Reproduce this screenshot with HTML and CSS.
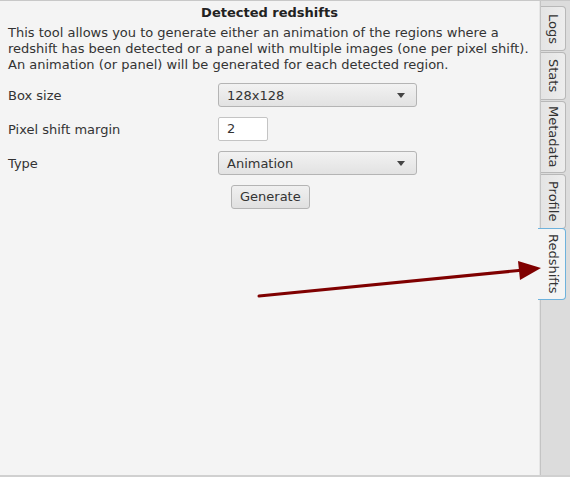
FILE: index.html
```html
<!DOCTYPE html>
<html>
<head>
<meta charset="utf-8">
<link rel="stylesheet" href="styles.css">
</head>
<body>
<div class="window">
  <div class="main">
    <div class="title">Detected redshifts</div>
    <p class="desc">This tool allows you to generate either an animation of the regions where a redshift has been detected or a panel with multiple images (one per pixel shift). An animation (or panel) will be generated for each detected region.</p>
    <div class="form">
      <div class="label">Box size</div>
      <div class="combo"><span>128x128</span><span class="caret"></span></div>
      <div class="label">Pixel shift margin</div>
      <div class="field">2</div>
      <div class="label">Type</div>
      <div class="combo"><span>Animation</span><span class="caret"></span></div>
      <div></div>
      <div class="button">Generate</div>
    </div>
  </div>
  <div class="tabs">
    <div class="tab t-logs">Logs</div>
    <div class="tab t-stats">Stats</div>
    <div class="tab t-meta">Metadata</div>
    <div class="tab t-profile">Profile</div>
    <div class="tab selected t-red">Redshifts</div>
  </div>
  <svg class="arrow" width="570" height="477" viewBox="0 0 570 477">
    <line x1="259" y1="296" x2="524" y2="270" stroke="#7f0000" stroke-width="3" stroke-linecap="round"/>
    <polygon points="541,268 518,261 520,280" fill="#7f0000"/>
  </svg>
</div>
</body>
</html>
```

FILE: styles.css
```css
html, body {
  margin: 0;
  padding: 0;
}
body {
  width: 570px;
  height: 477px;
  overflow: hidden;
  background: #f4f4f4;
  font-family: "DejaVu Sans", sans-serif;
  font-size: 13px;
  color: #333;
}
.window {
  position: relative;
  display: flex;
  box-sizing: border-box;
  height: 477px;
  border-top: 1px solid #c8c8c8;
  border-bottom: 2px solid #d0d0d0;
}
.main {
  flex: 1;
  padding: 4px 8px 0 8px;
  border-right: 1px solid #e6e6e6;
}
.title {
  text-align: center;
  font-weight: bold;
  line-height: 16px;
  color: #222;
}
.desc {
  margin: 4px 0 0 0;
  line-height: 16px;
}
.form {
  margin-top: 10px;
  display: grid;
  grid-template-columns: 210px 199px;
  row-gap: 10px;
  align-items: center;
}
.label {
  line-height: 16px;
  padding-top: 1px;
}
.combo {
  height: 24px;
  box-sizing: border-box;
  border: 1px solid #b4b4b4;
  border-radius: 3px;
  background: linear-gradient(#f2f2f2, #e2e2e2);
  display: flex;
  align-items: center;
  justify-content: space-between;
  padding: 0 11px 0 8px;
  color: #333;
}
.caret {
  width: 0;
  height: 0;
  border-left: 4px solid transparent;
  border-right: 4px solid transparent;
  border-top: 5px solid #444;
}
.field {
  width: 50px;
  height: 24px;
  box-sizing: border-box;
  border: 1px solid #c4c4c4;
  border-radius: 2px;
  background: #fff;
  padding-left: 8px;
  line-height: 22px;
}
.button {
  justify-self: start;
  margin-left: 13px;
  height: 24px;
  box-sizing: border-box;
  border: 1px solid #b4b4b4;
  border-radius: 3px;
  background: linear-gradient(#f0f0f0, #e0e0e0);
  padding: 0 8px;
  line-height: 22px;
  color: #333;
}
.tabs {
  width: 29px;
  background: #dcdcdc;
  border-left: 1px solid #c4c4c4;
  padding-top: 5px;
  display: flex;
  flex-direction: column;
  align-items: flex-start;
}
.tab {
  writing-mode: vertical-rl;
  width: 25px;
  box-sizing: border-box;
  border: 1px solid #b8b8b8;
  border-left: none;
  border-radius: 0 4px 4px 0;
  background: linear-gradient(to right, #e4e4e4, #ededed);
  line-height: 23px;
  text-align: center;
  color: #333;
  margin-bottom: 1px;
}
.t-logs { height: 45px; }
.t-stats { height: 48px; }
.t-meta { height: 72px; }
.t-profile { height: 55px; }
.t-red { height: 72px; margin-top: -2px; }
.tab.selected {
  margin-left: -3px;
  width: 28px;
  border: 1px solid #6eb2dc;
  border-left: none;
  background: #f4f4f4;
}
.arrow {
  position: absolute;
  left: 0;
  top: -1px;
  pointer-events: none;
}
```
